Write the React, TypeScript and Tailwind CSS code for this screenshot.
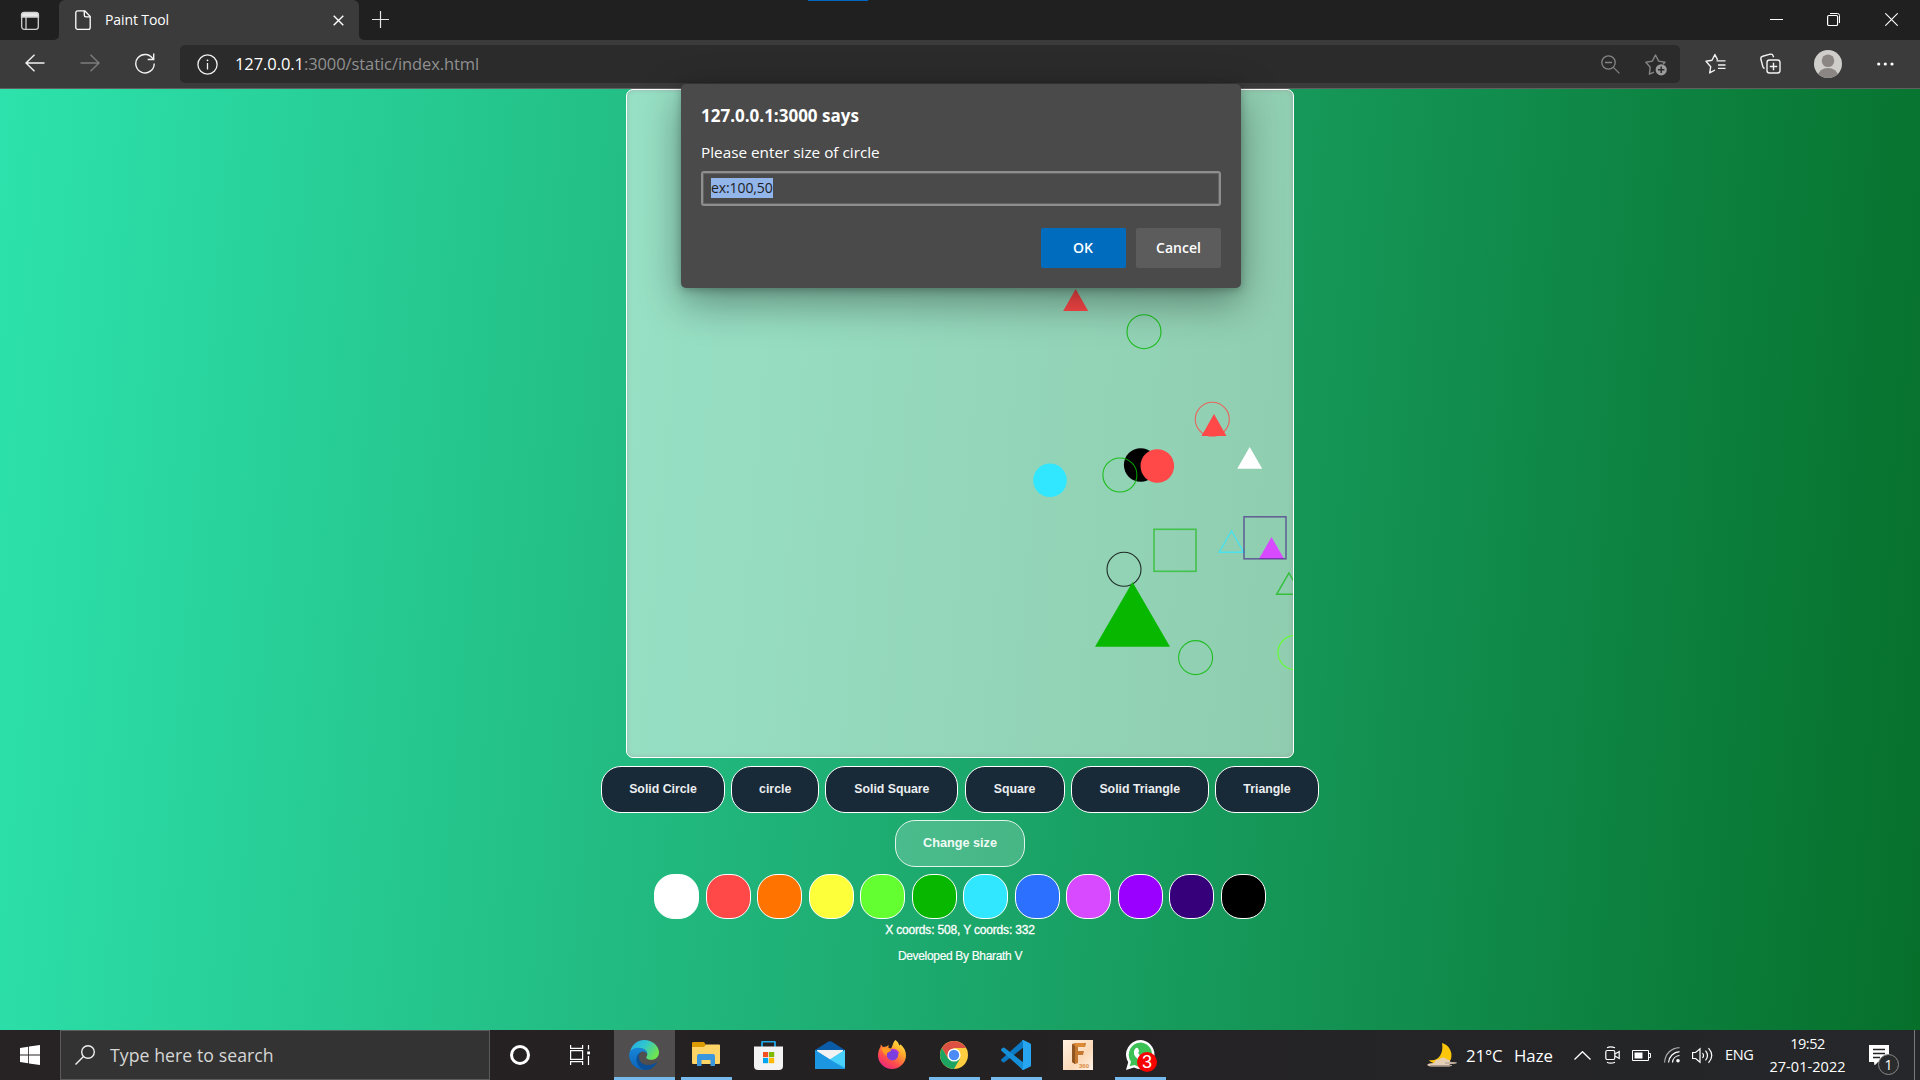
import React from "react";

const UI = "font-['Open_Sans','Noto_Sans',sans-serif]";

function TitleBar() {
  return (
    <div className="relative flex h-10 bg-[#202020]">
      <div className="absolute left-[808px] top-0 h-px w-[60px] bg-[#0067c0]" />
      <div className="flex w-[59px] items-center justify-center rounded-br-[5px] bg-[#202020]">
        <svg width="20" height="20" viewBox="0 0 20 20" className="mt-px" fill="none" stroke="#d0d0d0" strokeWidth="1.3">
          <rect x="1.7" y="1.7" width="16.6" height="16.6" rx="2.5" />
          <path d="M1.5 4.2a2.5 2.5 0 0 1 2.5-2.7h12a2.5 2.5 0 0 1 2.5 2.7V6h-17z" fill="#e8e8e8" />
          <path d="M6 6v12" />
        </svg>
      </div>
      <div className="relative flex w-[300px] items-center rounded-t-[6px] bg-[#3b3b3b] pl-4 pr-[15px]">
        <svg className="absolute -left-[5px] bottom-0" width="5" height="5" viewBox="0 0 5 5"><path d="M5 0v5H0a5 5 0 0 0 5-5z" fill="#3b3b3b" /></svg>
        <svg className="absolute -right-[5px] bottom-0" width="5" height="5" viewBox="0 0 5 5"><path d="M0 0v5h5a5 5 0 0 1-5-5z" fill="#3b3b3b" /></svg>
        <svg width="16" height="20" viewBox="0 0 16 20" fill="none" stroke="#fff" strokeWidth="1.3" strokeLinejoin="round">
          <path d="M2.7.8h7l5.5 5.6v11a1.9 1.9 0 0 1-1.9 1.9H2.7A1.9 1.9 0 0 1 .8 17.4V2.7A1.9 1.9 0 0 1 2.7.8z" />
          <path d="M9.3 1v4.2c0 1 .6 1.6 1.6 1.6h4.2" />
        </svg>
        <span className="ml-[14px] text-[14px] leading-5 tracking-[-0.1px] text-white">Paint Tool</span>
        <svg className="ml-auto mt-px" width="11" height="11" viewBox="0 0 11 11" stroke="#fff" strokeWidth="1.4"><path d="M.7.7l9.6 9.6M10.3.7L.7 10.3" /></svg>
      </div>
      <svg className="ml-[13px] mt-[11px]" width="17" height="17" viewBox="0 0 17 17" stroke="#e6e6e6" strokeWidth="1.2"><path d="M8.5 0v17M0 8.5h17" /></svg>
      <div className="ml-auto flex">
        <svg className="mt-[19px]" width="13" height="1" viewBox="0 0 13 1"><path d="M0 .5h13" stroke="#fff" /></svg>
        <svg className="ml-[44px] mt-[13px]" width="13" height="13" viewBox="0 0 13 13" fill="none" stroke="#fff">
          <rect x=".6" y="2.5" width="10" height="10" rx="1.2" strokeWidth="1.2" />
          <path d="M3 .5h7.5a2 2 0 0 1 2 2V10" strokeWidth="1" />
        </svg>
        <svg className="ml-[45px] mr-[22px] mt-[13px]" width="13" height="13" viewBox="0 0 13 13" stroke="#fff" strokeWidth="1.1"><path d="M.3.3l12.4 12.4M12.7.3L.3 12.7" /></svg>
      </div>
    </div>
  );
}

function Toolbar() {
  return (
    <div className="flex h-[49px] border-b border-[#606060] bg-[#3b3b3b]">
      <svg className="ml-[25px] mt-[14px]" width="20" height="18" viewBox="0 0 20 18" fill="none" stroke="#f2f2f2" strokeWidth="1.4"><path d="M19.5 9H1M9.500 .7L1 9l8.500 8.300" /></svg>
      <svg className="ml-[35px] mt-[14px]" width="20" height="18" viewBox="0 0 20 18" fill="none" stroke="#7c7c7c" strokeWidth="1.4"><path d="M.5 9H19M10.500 .7L19 9l-8.500 8.300" /></svg>
      <svg className="ml-[35px] mt-[13px]" width="20" height="21" viewBox="0 0 20 21" fill="none" stroke="#f2f2f2" strokeWidth="1.4">
        <path d="M18.200 6.500A9.200 9.200 0 1 0 19.200 10.500" />
        <path d="M18.700 .5v6h-6" />
      </svg>
      <div className="ml-[25px] mt-[5px] flex h-[38px] w-[1500px] items-center rounded-[5px] bg-[#2b2b2b] pl-[17px]">
        <svg width="21" height="21" viewBox="0 0 21 21" fill="none" stroke="#f2f2f2" strokeWidth="1.3">
          <circle cx="10.500" cy="10.500" r="9.600" /><path d="M10.500 9v6.500" /><circle cx="10.500" cy="6.300" r=".9" fill="#fff" stroke="none" />
        </svg>
        <span className={UI + " ml-[17px] text-[16.500px] leading-6 text-[#909090] tracking-[-0.08px]"}><span className="text-white">127.0.0.1</span>:3000/static/index.html</span>
        <svg className="ml-auto" width="19" height="19" viewBox="0 0 19 19" fill="none" stroke="#858585" strokeWidth="1.3"><circle cx="7.500" cy="7.500" r="6.700" /><path d="M12.400 12.400l6 6M4 7.500h7" /></svg>
        <svg className="ml-[25px] mr-[13px] mt-[1px]" width="22" height="22" viewBox="0 0 22 22" fill="none" stroke="#858585" strokeWidth="1.4" strokeLinejoin="round">
          <path d="M9 18.200l-4.600 2 .8-7L.9 8.300l6.400-1.200L10.500 1l3.200 6.100 6.300 1.200-2 2" />
          <circle cx="16.200" cy="15.800" r="5.600" fill="#9b9b9b" stroke="none" /><path d="M16.200 12.600V19M13 15.800h6.400" stroke="#2b2b2b" strokeWidth="1.5" />
        </svg>
      </div>
      <svg className="ml-[25px] mt-[13px]" width="21" height="21" viewBox="0 0 21 21" fill="none" stroke="#f2f2f2" strokeWidth="1.4" strokeLinejoin="round">
        <path d="M10 17l-5.300 2.900 1-6.200L1 8.300l6-1L9.900 1.500l2.700 5.400M11.500 7.900H20.500M13 12h7.500M13 15.400h7.500" />
      </svg>
      <svg className="ml-[34px] mt-[13px]" width="21" height="21" viewBox="0 0 21 21" fill="none" stroke="#f2f2f2" strokeWidth="1.4" strokeLinejoin="round">
        <path d="M4.600 15.500a3 3 0 0 1-1.800-2L.9 6.300a2.500 2.500 0 0 1 1.800-3L10.200 1.200a2.500 2.500 0 0 1 3 1.800l.4 1.300" />
        <rect x="7" y="7" width="13" height="13" rx="2.500" /><path d="M13.500 9.800v7.400M9.800 13.500h7.400" />
      </svg>
      <svg className="ml-[33px] mt-[10px]" width="28" height="28" viewBox="0 0 28 28">
        <clipPath id="avatar"><circle cx="14" cy="14" r="14" /></clipPath>
        <g clipPath="url(#avatar)"><rect width="28" height="28" fill="#d0cecb" /><circle cx="14" cy="10.700" r="6.300" fill="#8b8683" /><ellipse cx="14" cy="26" rx="10" ry="8" fill="#8b8683" /></g>
      </svg>
      <svg className="ml-[35px] mt-[22px]" width="17" height="4" viewBox="0 0 17 4" fill="#fff"><circle cx="1.700" cy="2" r="1.600" /><circle cx="8.300" cy="2" r="1.600" /><circle cx="15" cy="2" r="1.600" /></svg>
    </div>
  );
}

function Drawing() {
  return (
    <svg className="block" width="666" height="667" viewBox="627 90 666 667" fill="none" strokeWidth="1.1">
      <path d="M1075.700 289l12.500 22h-25z" fill="#ff4848" />
      <circle cx="1144" cy="331.700" r="17" stroke="#08b800" strokeOpacity=".85" />
      <circle cx="1212.300" cy="419.300" r="17" stroke="#ff4848" strokeOpacity=".8" />
      <path d="M1214 414l12.500 22h-25z" fill="#ff4848" />
      <circle cx="1140.700" cy="465" r="16.800" fill="#000" />
      <circle cx="1119.900" cy="475" r="17" stroke="#08b800" strokeOpacity=".85" />
      <circle cx="1157.300" cy="466" r="16.800" fill="#ff4848" />
      <circle cx="1050" cy="480.300" r="16.800" fill="#31e7ff" />
      <path d="M1249.700 447l12.500 21.700h-25z" fill="#fff" />
      <rect x="1154" y="529.300" width="42" height="42" stroke="#08b800" strokeOpacity=".58" strokeWidth="1.600" />
      <path d="M1231.500 531l12.400 21.300h-24.800z" stroke="#31e7ff" strokeOpacity=".75" strokeWidth="1.400" />
      <path d="M1271.500 537l12.500 21.700h-25z" fill="#d84aff" />
      <rect x="1244" y="516.800" width="42" height="42" stroke="#35007a" strokeOpacity=".52" strokeWidth="1.600" />
      <path d="M1289 573l12.400 21.300h-24.800z" stroke="#08b800" strokeOpacity=".68" strokeWidth="1.400" />
      <circle cx="1124" cy="569.300" r="17" stroke="#000" strokeOpacity=".8" />
      <path d="M1132.500 582l37.500 64.700h-75z" fill="#08b800" />
      <circle cx="1195.600" cy="657.600" r="17" stroke="#08b800" strokeOpacity=".8" />
      <circle cx="1295" cy="652.600" r="17" stroke="#63ff30" strokeOpacity=".9" strokeWidth="1.300" />
    </svg>
  );
}

function Dialog() {
  return (
    <div className={UI + " absolute left-[681px] top-[84px] flex h-[204px] w-[560px] flex-col rounded-[5px] bg-[#4a4a4a] px-5 text-white shadow-[0_14px_40px_rgba(0,0,0,0.38),0_2px_8px_rgba(0,0,0,0.25)]"}>
      <div className="mt-5 h-6 whitespace-nowrap text-[17px] font-bold leading-6">127.0.0.1:3000 says</div>
      <div className="mt-3 h-6 whitespace-nowrap text-[15.3px] leading-6">Please enter size of circle</div>
      <div className="mt-[7px] flex h-[35px] items-center rounded-[3px] border-2 border-[#8e8e8e] px-2 shadow-[inset_0_0_0_1px_#636363]">
        <span className="mb-[2px] h-5 bg-[#92b5ea] text-[14px] leading-5 tracking-[-0.1px] text-[#1e1e1e]">ex:100,50</span>
      </div>
      <div className="mt-[22px] flex justify-end gap-[10px]">
        <div className="flex h-10 w-[85px] items-center justify-center rounded-[2px] bg-[#006cbe] pb-[2px] pr-px text-[14px] font-semibold">OK</div>
        <div className="flex h-10 w-[85px] items-center justify-center rounded-[2px] bg-[#5c5c5c] pb-[2px] text-[14px] font-semibold">Cancel</div>
      </div>
    </div>
  );
}

const shapes = [
  { label: "Solid Circle", w: "w-[124px]" },
  { label: "circle", w: "w-[88px]" },
  { label: "Solid Square", w: "w-[133px]" },
  { label: "Square", w: "w-[100px]" },
  { label: "Solid Triangle", w: "w-[138px]" },
  { label: "Triangle", w: "w-[104px]" },
];

const colors = ["bg-white", "bg-[#ff4848]", "bg-[#ff7300]", "bg-[#feff3b]", "bg-[#63ff30]", "bg-[#08b800]", "bg-[#31e7ff]", "bg-[#2c70ff]", "bg-[#d84aff]", "bg-[#9900ff]", "bg-[#35007a]", "bg-black"];

function Page() {
  return (
    <div className="flex h-[941px] flex-col items-center bg-[linear-gradient(95deg,#2de2ac_0%,#1eae73_46%,#06702b_100%)] font-['Liberation_Sans',Arial,sans-serif] text-white">
      <div className="h-[669px] w-[668px] overflow-hidden rounded-[7px] border border-white bg-[rgba(255,255,255,0.53)] shadow-[inset_0_0_4px_rgba(150,110,130,0.35)]">
        <Drawing />
      </div>
      <div className="mt-2 flex h-[47px] w-[718px] justify-between">
        {shapes.map((s) => (
          <div key={s.label} className={s.w + " flex items-center justify-center whitespace-nowrap rounded-[20px] border border-white bg-[#182a38] text-[12.300px] font-bold text-[#eceef0]"}>{s.label}</div>
        ))}
      </div>
      <div className="mt-[7px] flex h-[47px] w-[130px] items-center justify-center rounded-[20px] border border-[#e2f5ec] bg-white/20 pt-px text-[12.700px] font-bold text-[#f0faf5]">Change size</div>
      <div className="mt-[7px] flex w-[612px] justify-between">
        {colors.map((c) => (
          <div key={c} className={c + " h-[45px] w-[45px] rounded-[20px] border border-white"} />
        ))}
      </div>
      <div className="mt-[3px] text-[12px] leading-4 tracking-[-0.17px] [-webkit-text-stroke:0.3px]">X coords: 508, Y coords: 332</div>
      <div className="mt-[10px] text-[12px] leading-4 tracking-[-0.33px] [-webkit-text-stroke:0.15px]">Developed By Bharath V</div>
    </div>
  );
}

function EdgeIcon() {
  return (
    <svg className="mr-px" width="30" height="30" viewBox="0 0 30 30">
      <defs>
        <linearGradient id="e1" x1="0" y1="0" x2="1" y2=".5"><stop offset="0" stopColor="#23a8e8" /><stop offset=".5" stopColor="#2fc6cf" /><stop offset="1" stopColor="#6de352" /></linearGradient>
        <linearGradient id="e2" x1="0" y1="0" x2="0" y2="1"><stop offset="0" stopColor="#1787d8" /><stop offset="1" stopColor="#0d62b8" /></linearGradient>
      </defs>
      <path d="M1 12C2.500 5 8 0 15 0c8.500 0 15 6 15 12.500 0 4.500-3.500 7.300-7.500 7.300-3.500 0-5.300-1.300-5.300-2.400 0-.7 1.100-1.200 1.100-3.200 0-3-3-6-8-6C6 8.200 3 9.500 1 12z" fill="url(#e1)" />
      <path d="M.1 15C0 10 5 7.800 9.500 7.800c5.500 0 8.800 3.200 8.800 6.400-1.500-2.400-4.300-3.200-6.300-2.200-3 1.500-4.500 5.500-2.300 10 1.800 4 5 6.500 9.300 7.400C9 32 .3 24.500.1 15z" fill="url(#e2)" />
      <path d="M11.500 12.300c-3.500 3.500-1.500 12 6 12.700 4 .4 7.500-.8 9.600-2.700.6-.4 1.100.1.700.7C25 27.500 21 30 17 29.900 10 29.500 5 21 8.500 15.500c.8-1.500 1.800-2.600 3-3.200z" fill="#0b4f96" />
    </svg>
  );
}

function FolderIcon() {
  return (
    <svg width="28" height="24" viewBox="0 0 28 24" className="mb-[2px]">
      <path d="M0 1.300Q0 0 1.300 0H12l2 3h13q1 0 1 1v5H0z" fill="#dc9a03" />
      <path d="M0 5h12l2-2.500h13q1 0 1 1V21q0 1-1 1H1q-1 0-1-1z" fill="#ffd466" />
      <path d="M5 24V14q0-2 2-2h14q2 0 2 2v10h-4.500v-6h-9v6z" fill="#3a96dd" />
    </svg>
  );
}

function StoreIcon() {
  return (
    <svg width="29" height="29" viewBox="0 0 29 29">
      <path d="M8 6V1.500q0-.8.800-.8h11.400q.8 0 .8.800V6" fill="none" stroke="#20a8e8" strokeWidth="1.800" />
      <path d="M0 5.500h29V25q0 4-4 4H4q-4 0-4-4z" fill="#f3f3f3" />
      <path d="M9 11h5.200v5.200H9z" fill="#f25022" /><path d="M15 11h5.200v5.200H15z" fill="#7fba00" /><path d="M9 17h5.200v5.200H9z" fill="#00a4ef" /><path d="M15 17h5.200v5.200H15z" fill="#ffb900" />
    </svg>
  );
}

function MailIcon() {
  return (
    <svg width="30" height="28" viewBox="0 0 30 28">
      <path d="M0 9L13.500.6q1.500-.9 3 0L30 9v4H0z" fill="#0a5ba8" />
      <path d="M2 9h26v4L15 23 2 13z" fill="#f2f2f2" />
      <path d="M0 9l15 9.500L30 9v18q0 1-1 1H1q-1 0-1-1z" fill="#2fb5ee" />
      <path d="M0 9l30 19H1q-1 0-1-1z" fill="#1c96e0" />
      <path d="M15 18.500L30 9v17.500z" fill="#49d0fb" />
    </svg>
  );
}

function FirefoxIcon() {
  return (
    <svg width="28" height="29" viewBox="0 0 28 29" className="mb-px">
      <defs><linearGradient id="f1" x1=".85" y1="0" x2=".2" y2="1"><stop offset="0" stopColor="#fff04a" /><stop offset=".35" stopColor="#ffa52b" /><stop offset=".7" stopColor="#ff4a4e" /><stop offset="1" stopColor="#e52386" /></linearGradient></defs>
      <path d="M17.500 0c2 1.500 3.300 3.500 3.800 5.500 1-.3 1.200-1.200 1.200-1.200C26 7.500 28 11 28 15.500 28 23 21.500 29 14 29S0 23 0 15.500C0 11 1.500 8.500 2.500 7l.3-2.500L5 7l3.500-.5L10.500 5v3l2.500.5C15 6 14.500 2.500 17.500 0z" fill="url(#f1)" />
      <circle cx="14.500" cy="14.700" r="5.700" fill="#7d3ee0" />
      <path d="M3.500 8l7 .5 3 2-3 1.800c-1.500.5-2.500 2-1.800 4C6 14 4 11.500 3.500 8z" fill="#ff9a22" />
      <path d="M14 9.500q5 0 6.500 4" fill="none" stroke="#b533d8" strokeWidth="1.500" />
    </svg>
  );
}

function ChromeIcon() {
  return (
    <svg width="28" height="28" viewBox="0 0 28 28">
      <circle cx="14" cy="14" r="14" fill="#ffcd40" />
      <path d="M1.900 7A14 14 0 0 1 26.100 7H14L8 17.500z" fill="#dd5144" />
      <path d="M1.900 7A14 14 0 0 0 14 28l6-10.500L14 14 8 17.500z" fill="#1da462" />
      <circle cx="14" cy="14" r="6.600" fill="#fff" /><circle cx="14" cy="14" r="5.200" fill="#4c8bf5" />
    </svg>
  );
}

function CodeIcon() {
  return (
    <svg width="30" height="30" viewBox="0 0 30 30">
      <path d="M22 0v7.800L3.400 22.300q-.8.500-1.500 0L.4 20.900q-.8-.8 0-1.600z" fill="#0b79c4" />
      <path d="M22 30v-7.800L3.400 7.700q-.8-.5-1.500 0L.4 9.100q-.8.800 0 1.600z" fill="#1590d8" />
      <path d="M21 .3Q21.500 0 22.300.1L29 3.200q1 .5 1 1.500v20.600q0 1-1 1.500L22.300 30q-.8 0-1.300-.4l1-2V2.500z" fill="#27a5f1" />
    </svg>
  );
}

function FusionIcon() {
  return (
    <div className="relative h-[30px] w-[30px] overflow-hidden bg-[linear-gradient(135deg,#fff1e2,#fbd9b8_60%,#fff3e8)]">
      <svg className="absolute left-[9px] top-[3px]" width="14" height="21" viewBox="0 0 14 21">
        <path d="M0 1l3-1h11l-1 4H6v4h6l-1 4H6v8l-3 1-3-2z" fill="#c4772f" /><path d="M0 1l3 2v18l-3-2z" fill="#8f5523" /><path d="M3 3l3 1h7l-1-4H3z" fill="#dc8a35" />
      </svg>
      <span className="absolute bottom-[1px] right-[4px] font-['Liberation_Sans',sans-serif] text-[6px] font-bold leading-[6px] text-[#d88b3d]">360</span>
    </div>
  );
}

function WhatsAppIcon() {
  return (
    <div className="relative left-px h-[30px] w-[30px]">
      <svg width="30" height="30" viewBox="0 0 30 30">
        <path d="M15 0a14.700 14.700 0 0 1 0 29.300q-4 0-7-1.700L0 30l2.200-7.800A14.700 14.700 0 0 1 15 0z" fill="#fff" />
        <path d="M15 2.500a12.200 12.200 0 0 1 0 24.300q-3.700 0-6.500-1.800L3.700 26.300 5 21.700A12.200 12.200 0 0 1 15 2.500z" fill="#3cc254" />
        <path d="M10 8q1.500-.8 2 .3l1 2.500q.3.800-.9 2 1.500 3.500 5.200 5 1.200-1.500 2-1.400l3 1.500c0 5-5 4.500-8.500 2.500Q7 16.500 8 11q.5-2 2-3z" fill="#fff" />
      </svg>
      <div className="absolute left-[11px] top-[12px] flex h-5 w-5 items-center justify-center rounded-full bg-[#f50400] font-['Liberation_Sans',sans-serif] text-[18px] leading-5 text-white">3</div>
    </div>
  );
}

const apps = [
  { id: "edge", icon: <EdgeIcon />, open: true, active: true },
  { id: "folder", icon: <FolderIcon />, open: true },
  { id: "store", icon: <StoreIcon /> },
  { id: "mail", icon: <MailIcon /> },
  { id: "firefox", icon: <FirefoxIcon /> },
  { id: "chrome", icon: <ChromeIcon />, open: true },
  { id: "code", icon: <CodeIcon />, open: true },
  { id: "fusion", icon: <FusionIcon /> },
  { id: "whatsapp", icon: <WhatsAppIcon />, open: true },
];

function Taskbar() {
  return (
    <div className={UI + " flex h-[50px] bg-[linear-gradient(90deg,#272223,#242122_50%,#25272a)] text-white"}>
      <div className="flex w-[60px] items-center justify-center">
        <svg width="20" height="20" viewBox="0 0 20 20" fill="#fff"><path d="M0 2.900L8.200 1.700v7.900H0zM9 1.600L20 0v9.600H9zM0 10.400h8.200v7.900L0 17.100zM9 10.400h11V20L9 18.400z" /></svg>
      </div>
      <div className="flex w-[430px] items-center border border-[#5b5b5b] bg-[#333]">
        <svg className="ml-[14px]" width="20" height="20" viewBox="0 0 20 20" fill="none" stroke="#f0f0f0" strokeWidth="1.400"><circle cx="13" cy="7" r="6.300" /><path d="M8.500 11.500L.5 19.500" /></svg>
        <span className="ml-[15px] whitespace-nowrap text-[17.700px] leading-6 tracking-[0.05px] text-[#d6d6d6]">Type here to search</span>
      </div>
      <div className="flex w-[60px] items-center justify-center"><div className="h-5 w-5 rounded-full border-[3px] border-white" /></div>
      <div className="flex w-[63px] items-center pl-5">
        <svg width="20" height="20" viewBox="0 0 20 20" fill="none" stroke="#fff" strokeWidth="1.200"><path d="M.6 0v3.400h12V0M.6 20v-3.400h12V20M.6 5.600h12v8.800H.6zM18.500 0v4.500M18.500 11v9" /><rect x="17.200" y="6.500" width="2.800" height="2.800" fill="#fff" stroke="none" /></svg>
      </div>
      {apps.map((a) => (
        <div key={a.id} className={"flex w-[62px] shrink-0 flex-col items-center " + (a.active ? "pl-px" : "")}>
          <div className={"flex h-[47px] items-center justify-center pt-[3px] " + (a.active ? "w-[61px] bg-[#504e4f]" : "w-full")}>{a.icon}</div>
          {a.open && <div className={"h-[3px] bg-[#76b9ed] " + (a.active ? "w-[61px]" : "ml-px w-[51px]")} />}
        </div>
      ))}
      <div className="ml-auto flex items-center">
        <svg width="30" height="24" viewBox="0 0 30 24">
          <path d="M15 0c7 2 11 9 9 16-2 5-8 6-13 5-4-.5-8-2-9-4 9 2 15-6 13-17z" fill="#fdc60a" />
          <path d="M0 22q1-2 7-2 1-4 5-3.500 4-4 8 0 3-.5 3.500 2.500 7 0 6.500 1-2 1-8 1.300Q26 23 22 23.500H3z" fill="#e5cfb5" />
          <path d="M3 22.500h22M18 20h10" stroke="#a69a90" />
        </svg>
        <span className="ml-[9px] mt-[2px] w-[48px] whitespace-nowrap text-[16.800px] tracking-[-0.1px]">21°C</span>
        <span className="mt-[2px] w-[60px] text-[16.800px]">Haze</span>
        <svg width="17" height="9" viewBox="0 0 17 9" fill="none" stroke="#fff" strokeWidth="1.300"><path d="M.5 8.500l8-7.800 8 7.800" /></svg>
        <svg className="ml-[14px]" width="15" height="18" viewBox="0 0 15 18" fill="none" stroke="#fff" strokeWidth="1.200"><rect x=".8" y="4.500" width="9" height="9" rx="1.500" /><path d="M10 8l4.200-2.500v7L10 10M2 1.800q3.500-2 8 0M2 16.200q3.500 2 8 0" /></svg>
        <svg className="ml-[12px]" width="19" height="11" viewBox="0 0 19 11"><path d="M.5.5h16v10H.5zM16.500 3.500h2v4h-2" fill="none" stroke="#fff" /><path d="M2.500 2.500h8v6h-8z" fill="#fff" /></svg>
        <svg className="ml-[13px]" width="17" height="16" viewBox="0 0 17 16" fill="none" stroke="#fff" strokeWidth="1.200"><path d="M.6 15.500C1 7 7 1 15.500.6" stroke="#aaa" /><path d="M4.500 15.500C5 9.500 9.500 5 15.500 4.600M8.500 15.500c.3-3.800 3.200-6.700 7-7" /><circle cx="14" cy="13.800" r="1.800" fill="#fff" stroke="none" /></svg>
        <svg className="ml-[11px]" width="21" height="17" viewBox="0 0 21 17" fill="none" stroke="#fff" strokeWidth="1.200"><path d="M.6 5.500h3L8 1.800v13.400l-4.400-3.700h-3zM10.500 6q2 2.500 0 5M13.500 3.700q4 4.800 0 9.600M16.500 1.200q6.500 7.300 0 14.600" /></svg>
        <span className="ml-[12px] w-[44px] text-[14.500px] tracking-[-0.3px]">ENG</span>
        <div className="flex w-[78px] flex-col items-center whitespace-nowrap pr-px text-[14.500px] leading-[23px]"><span className="tracking-[-0.5px]">19:52</span><span className="tracking-[0.05px]">27-01-2022</span></div>
        <div className="relative ml-[22px] h-5 w-[45px]">
          <svg width="20" height="20" viewBox="0 0 20 20"><path d="M0 0h20v17H9l-3.500 3.500L5 17H0z" fill="#fff" /><path d="M4 4.500h12M4 8.500h12M4 12.500h7" stroke="#222" strokeWidth="1.300" /></svg>
          <div className="absolute left-[9px] top-[9px] flex h-[21px] w-[21px] items-center justify-center rounded-full border border-[#8a8a8a] bg-[#2a2b2d] text-[14px] leading-none">1</div>
        </div>
        <div className="mr-[5px] h-[50px] w-px bg-[#7b7b7b]" />
      </div>
    </div>
  );
}

export default function App() {
  return (
    <div className="relative h-[1080px] w-[1920px] overflow-hidden font-['Open_Sans','Noto_Sans',sans-serif]">
      <TitleBar />
      <Toolbar />
      <Page />
      <Taskbar />
      <Dialog />
    </div>
  );
}
